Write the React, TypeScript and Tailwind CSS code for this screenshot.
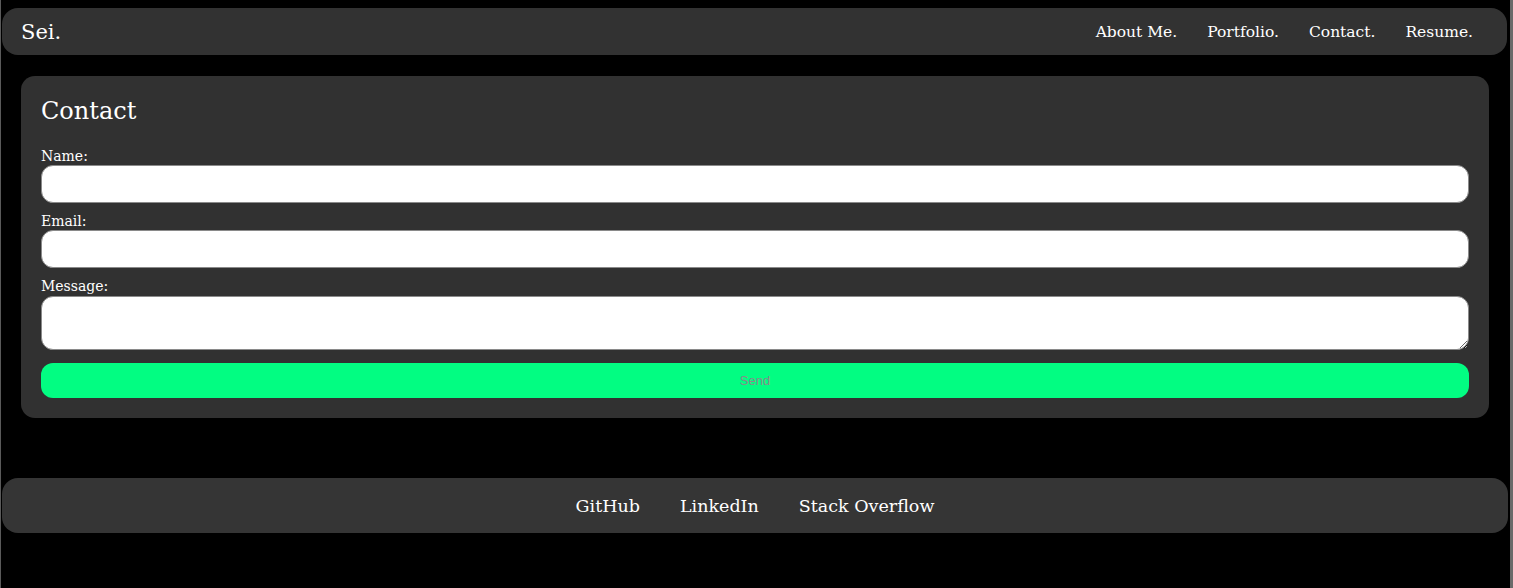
import React from 'react';

const serif = "font-['DejaVu_Serif',serif]";

function NavBar() {
  const links = ["About Me.", "Portfolio.", "Contact.", "Resume."];
  return (
    <nav className="ml-[1px] mr-[3px] mt-2 h-[47px] rounded-2xl bg-[#323232] flex items-center justify-between pl-[19px] pr-[34px] pt-[3px]">
      <span className="text-[21px] text-white">Sei.</span>
      <ul className="flex items-center gap-[30px]">
        {links.map((l) => (
          <li key={l} className="text-[15.5px] text-white">{l}</li>
        ))}
      </ul>
    </nav>
  );
}

function ContactCard() {
  return (
    <section className="ml-5 mr-[21px] mt-[21px] rounded-[14px] bg-[#313131] px-5 pt-[18px] pb-5">
      <h1 className="text-[24px] leading-[34px] text-white mb-[19px]">Contact</h1>
      <form className="flex flex-col" onSubmit={(e) => e.preventDefault()}>
        <label className="text-[14px] leading-[18px] text-white">Name:</label>
        <input
          type="text"
          className="h-[38px] rounded-xl bg-white border border-[#8a8a8a] mb-[9px] outline-none"
        />
        <label className="text-[14px] leading-[18px] text-white">Email:</label>
        <input
          type="email"
          className="h-[38px] rounded-xl bg-white border border-[#8a8a8a] mb-[9px] outline-none"
        />
        <label className="text-[14px] leading-[19px] text-white">Message:</label>
        <textarea className="h-[54px] rounded-xl bg-white border border-[#8a8a8a] outline-none resize-y" />
        <button
          type="submit"
          className="mt-[13px] h-[35px] rounded-xl bg-[#02fd82] text-[13px] text-[#8a8a8a] font-['Liberation_Sans',sans-serif]"
        >
          Send
        </button>
      </form>
    </section>
  );
}

function Footer() {
  const links = ["GitHub", "LinkedIn", "Stack Overflow"];
  return (
    <footer className="ml-[1px] mr-[2px] mt-[60px] h-[55px] rounded-2xl bg-[#353535] flex items-center justify-center gap-10 pt-[2px]">
      {links.map((l) => (
        <a key={l} className="text-[17.5px] text-white">{l}</a>
      ))}
    </footer>
  );
}

export default function App() {
  return (
    <div className={`min-h-[588px] bg-black border-l border-r-[3px] border-l-[#5a5a5a] border-r-[#6a6a6a] overflow-hidden ${serif}`}>
      <NavBar />
      <ContactCard />
      <Footer />
    </div>
  );
}
